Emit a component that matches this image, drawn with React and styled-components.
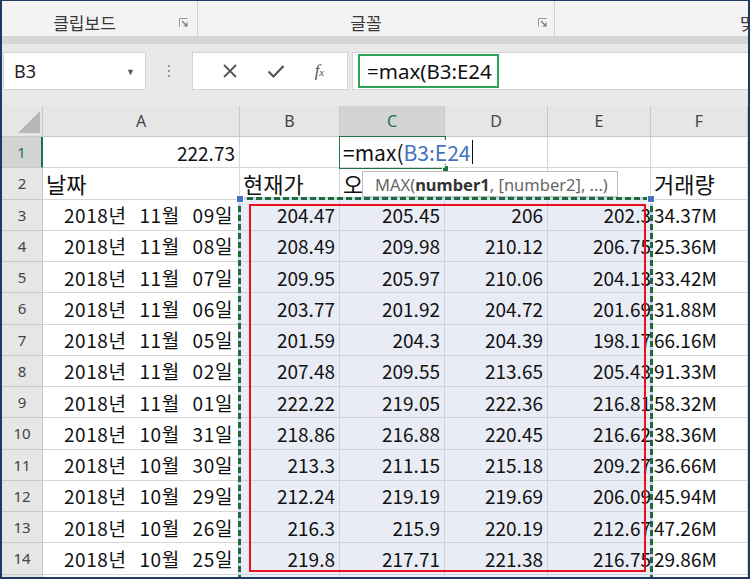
import React from 'react'
import styled, { createGlobalStyle } from 'styled-components'

const GlobalStyle = createGlobalStyle`
  html, body { margin: 0; padding: 0; background: #fff; }
  body { font-family: "Noto Sans CJK KR", "Noto Sans", sans-serif; }
  * { box-sizing: border-box; }
`

const rows = [
  ['2018년 11월 09일', '204.47', '205.45', '206', '202.3', '34.37M'],
  ['2018년 11월 08일', '208.49', '209.98', '210.12', '206.75', '25.36M'],
  ['2018년 11월 07일', '209.95', '205.97', '210.06', '204.13', '33.42M'],
  ['2018년 11월 06일', '203.77', '201.92', '204.72', '201.69', '31.88M'],
  ['2018년 11월 05일', '201.59', '204.3', '204.39', '198.17', '66.16M'],
  ['2018년 11월 02일', '207.48', '209.55', '213.65', '205.43', '91.33M'],
  ['2018년 11월 01일', '222.22', '219.05', '222.36', '216.81', '58.32M'],
  ['2018년 10월 31일', '218.86', '216.88', '220.45', '216.62', '38.36M'],
  ['2018년 10월 30일', '213.3', '211.15', '215.18', '209.27', '36.66M'],
  ['2018년 10월 29일', '212.24', '219.19', '219.69', '206.09', '45.94M'],
  ['2018년 10월 26일', '216.3', '215.9', '220.19', '212.67', '47.26M'],
  ['2018년 10월 25일', '219.8', '217.71', '221.38', '216.75', '29.86M'],
]

const cols = ['A', 'B', 'C', 'D', 'E', 'F']

function Launcher() {
  return (
    <LauncherIcon width="9" height="9" viewBox="0 0 9 9">
      <path d="M0.5 8.5V0.5H8.5" fill="none" stroke="#9a9a9a" strokeWidth="1" />
      <path d="M3 3L8 8M8 4.5V8H4.5" fill="none" stroke="#7a7a7a" strokeWidth="1.2" />
    </LauncherIcon>
  )
}

function App() {
  return (
    <>
      <GlobalStyle />
      <Frame>
        <Ribbon>
          <Group $w={196}>
            <GroupLabel $pr={12}>클립보드</GroupLabel>
            <Launcher />
          </Group>
          <Group $w={357} $mr={7}>
            <GroupLabel $pr={4}>글꼴</GroupLabel>
            <Launcher />
          </Group>
          <Group $w={200} $open>
            <GroupLabel $pl={185} $left>맞춤</GroupLabel>
          </Group>
        </Ribbon>

        <FormulaBar>
          <NameBox>
            <span>B3</span>
            <Caret>▼</Caret>
          </NameBox>
          <Grip>
            <i /><i /><i />
          </Grip>
          <FxBox>
            <svg width="16" height="16" viewBox="0 0 16 16">
              <path d="M2 2L14 14M14 2L2 14" stroke="#555" strokeWidth="1.8" />
            </svg>
            <svg width="18" height="16" viewBox="0 0 18 16">
              <path d="M1.5 8.5L6.5 13.5L16.5 3" fill="none" stroke="#555" strokeWidth="2.2" />
            </svg>
            <FxText>
              f<sub>x</sub>
            </FxText>
          </FxBox>
          <Input>
            <InputHighlight>=max(B3:E24</InputHighlight>
          </Input>
        </FormulaBar>

        <Sheet>
          <Corner>
            <svg width="22" height="22" viewBox="0 0 22 22">
              <path d="M22 0V22H0Z" fill="#b7b7b7" />
            </svg>
          </Corner>
          {cols.map(c => (
            <ColHead key={c} $active={c === 'C'}>{c}</ColHead>
          ))}

          <RowHead $active>1</RowHead>
          <Cell $align="right">222.73</Cell>
          <Cell />
          <Cell $edit>
            <EditText>
              =max(<Ref>B3:E24</Ref>
            </EditText>
          </Cell>
          <Cell />
          <Cell />
          <Cell />

          <RowHead>2</RowHead>
          <Cell $big>날짜</Cell>
          <Cell $big>현재가</Cell>
          <Cell $big>오</Cell>
          <Cell />
          <Cell />
          <Cell $big>거래량</Cell>

          {rows.map((r, i) => (
            <React.Fragment key={i}>
              <RowHead>{i + 3}</RowHead>
              <Cell $align="right" $date>{r[0]}</Cell>
              <Cell $align="right" $fill>{r[1]}</Cell>
              <Cell $align="right" $fill>{r[2]}</Cell>
              <Cell $align="right" $fill>{r[3]}</Cell>
              <Cell $align="right" $fill $clip>
                <Overflow>{r[4]}</Overflow>
              </Cell>
              <Cell>{r[5]}</Cell>
            </React.Fragment>
          ))}

          <RowHead>15</RowHead>
          <Cell />
          <Cell $fill />
          <Cell $fill />
          <Cell $fill />
          <Cell $fill />
          <Cell />

          <ActiveBorder>
            <FillHandle />
          </ActiveBorder>
          <Marquee />
          <Handle style={{ left: 234 }} />
          <Handle style={{ left: 645 }} />
          <RedBox />
          <Tooltip>
            MAX(<b>number1</b>, [number2], ...)
          </Tooltip>
        </Sheet>
      </Frame>
    </>
  )
}

export default App

const Frame = styled.div`
  width: 750px;
  height: 579px;
  overflow: hidden;
  border: 2px solid #1f3864;
  border-top-width: 1px;
  background: #fff;
`

const Ribbon = styled.div`
  display: flex;
  height: 35px;
  background: #f3f3f3;
`

const Group = styled.div`
  width: ${p => p.$w}px;
  flex: none;
  display: flex;
  align-items: center;
  padding-right: ${p => p.$mr || 9}px;
  border-right: ${p => (p.$open ? 'none' : '1px solid #d2d2d2')};
`

const GroupLabel = styled.div`
  flex: 1;
  text-align: ${p => (p.$left ? 'left' : 'center')};
  padding-top: 7px;
  padding-right: ${p => p.$pr || 0}px;
  padding-left: ${p => p.$pl || 0}px;
  font-size: 17px;
  color: #383838;
  white-space: nowrap;
`

const LauncherIcon = styled.svg`
  flex: none;
  margin-top: 7px;
`

const FormulaBar = styled.div`
  height: 70px;
  background: #e9e9e9;
  border-top: 8px solid #d6d6d6;
  display: flex;
  align-items: flex-start;
  padding: 8px 0 0 1px;
`

const NameBox = styled.div`
  width: 143px;
  height: 38px;
  background: #fff;
  border: 1px solid #d4d4d4;
  display: flex;
  align-items: center;
  justify-content: space-between;
  padding: 0 10px 0 10px;
  font-family: "Noto Sans", sans-serif;
  font-size: 18px;
  color: #222;
`

const Caret = styled.span`
  font-size: 9px;
  color: #555;
`

const Grip = styled.div`
  width: 46px;
  height: 38px;
  display: flex;
  flex-direction: column;
  align-items: center;
  justify-content: center;
  gap: 3px;
  i {
    width: 2px;
    height: 2px;
    background: #9a9a9a;
  }
`

const FxBox = styled.div`
  width: 156px;
  height: 38px;
  background: #fff;
  border: 1px solid #d4d4d4;
  display: flex;
  align-items: center;
  justify-content: space-around;
  padding: 0 8px 0 14px;
`

const FxText = styled.span`
  font-family: "Liberation Serif", serif;
  font-style: italic;
  font-size: 17px;
  color: #555;
  sub {
    font-size: 11px;
    vertical-align: 0;
  }
`

const Input = styled.div`
  flex: 1;
  height: 38px;
  margin-left: 4px;
  background: #fff;
  border-left: 1px solid #d4d4d4;
  border-top: 1px solid #d4d4d4;
  border-bottom: 1px solid #d4d4d4;
  padding: 1px 0 0 5px;
`

const InputHighlight = styled.div`
  display: inline-flex;
  align-items: center;
  height: 34px;
  padding: 0 5px 0 7px;
  border: 2px solid #2aa55b;
  font-family: "Noto Sans", sans-serif;
  font-size: 20.5px;
  color: #111;
`

const Sheet = styled.div`
  position: relative;
  display: grid;
  grid-template-columns: 41px 197px 100px 105px 103px 103px 1fr;
  grid-template-rows: 31px repeat(15, 31.25px);
`

const Corner = styled.div`
  background: #e6e6e6;
  border-right: 1px solid #c8c8c8;
  border-bottom: 1px solid #c8c8c8;
  display: flex;
  align-items: flex-end;
  justify-content: flex-end;
  padding: 0 2px 3px 0;
`

const ColHead = styled.div`
  display: flex;
  align-items: center;
  justify-content: center;
  background: ${p => (p.$active ? '#d3d3d3' : '#e6e6e6')};
  color: ${p => (p.$active ? '#217346' : '#444')};
  border-right: 1px solid #c8c8c8;
  border-bottom: 1px solid #c8c8c8;
  font-family: "Noto Sans", sans-serif;
  font-size: 16px;
`

const RowHead = styled.div`
  display: flex;
  align-items: center;
  justify-content: center;
  background: ${p => (p.$active ? '#d3d3d3' : '#e6e6e6')};
  color: ${p => (p.$active ? '#217346' : '#444')};
  border-right: ${p => (p.$active ? '2px solid #217346' : '1px solid #c8c8c8')};
  border-bottom: 1px solid #c8c8c8;
  font-family: "Noto Sans", sans-serif;
  font-size: 15px;
`

const Cell = styled.div`
  position: relative;
  display: flex;
  align-items: center;
  justify-content: ${p => (p.$align === 'right' ? 'flex-end' : 'flex-start')};
  padding: 0 ${p => (p.$clip ? 0 : p.$date ? 6 : 4)}px 0 3px;
  background: ${p => (p.$fill ? '#e9ecf5' : '#fff')};
  border-right: 1px solid ${p => (p.$fill ? '#cdd2de' : '#d6d6d6')};
  border-bottom: 1px solid ${p => (p.$fill ? '#cdd2de' : '#d6d6d6')};
  overflow: ${p => (p.$edit ? 'visible' : 'hidden')};
  white-space: nowrap;
  font-size: ${p => (p.$big ? 22 : 19)}px;
  word-spacing: ${p => (p.$date ? 8 : 0)}px;
  letter-spacing: ${p => (p.$date ? 0.6 : 0)}px;
  color: #111;
  z-index: ${p => (p.$edit ? 4 : 'auto')};
`

const Overflow = styled.span`
  margin-right: -1px;
`

const EditText = styled.span`
  background: #fff;
  padding-right: 2px;
  border-right: 1px solid #111;
  line-height: 24px;
  font-size: 21px;
`

const Ref = styled.span`
  color: #4472c4;
`

const ActiveBorder = styled.div`
  position: absolute;
  left: 337px;
  top: 30px;
  width: 107px;
  height: 33px;
  border: 2px solid #217346;
  pointer-events: none;
  z-index: 3;
`

const FillHandle = styled.div`
  position: absolute;
  right: -5px;
  bottom: -5px;
  width: 7px;
  height: 7px;
  background: #217346;
  border: 1px solid #fff;
`

const dashH = 'repeating-linear-gradient(90deg, #1e6b3a 0 6px, #c9d5ee 6px 9px)'
const dashV = 'repeating-linear-gradient(180deg, #1e6b3a 0 6px, #c9d5ee 6px 9px)'

const Marquee = styled.div`
  position: absolute;
  left: 236px;
  top: 91px;
  width: 415px;
  height: 420px;
  background:
    ${dashH} top left / 100% 3px no-repeat,
    ${dashV} top left / 3px 100% no-repeat,
    ${dashV} top right / 3px 100% no-repeat;
  z-index: 4;
`

const Handle = styled.div`
  position: absolute;
  top: 89px;
  width: 8px;
  height: 8px;
  background: #4472c4;
  border: 1px solid #fff;
  z-index: 6;
`

const RedBox = styled.div`
  position: absolute;
  left: 247px;
  top: 98px;
  width: 397px;
  height: 368px;
  border: 2px solid #e8101a;
  z-index: 5;
`

const Tooltip = styled.div`
  position: absolute;
  left: 360px;
  top: 65px;
  width: 256px;
  height: 26px;
  display: flex;
  align-items: center;
  padding-left: 12px;
  background: #fff;
  border: 1px solid #bdbdbd;
  font-family: "Noto Sans", sans-serif;
  font-size: 16.5px;
  color: #666;
  white-space: nowrap;
  z-index: 7;
  b {
    color: #333;
    font-weight: 700;
  }
`
